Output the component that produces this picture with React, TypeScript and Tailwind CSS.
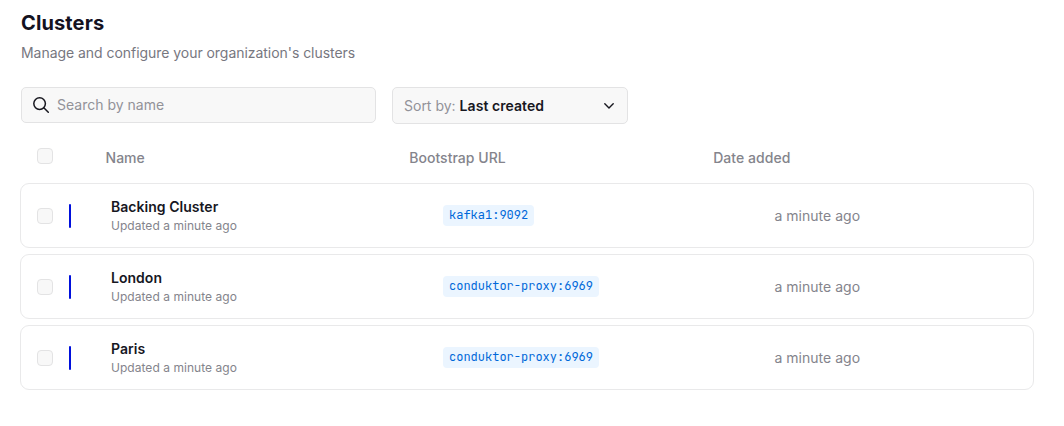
const rows = [
  { name: "Backing Cluster", url: "kafka1:9092" },
  { name: "London", url: "conduktor-proxy:6969" },
  { name: "Paris", url: "conduktor-proxy:6969" },
];

function Checkbox() {
  return <span className="block size-4 shrink-0 rounded-[4px] border border-[#e3e3e4] bg-[#f8f8f8]" />;
}

export default function App() {
  return (
    <main className="h-[426px] w-[1064px] overflow-hidden bg-white pl-5 pt-2 font-['Inter',sans-serif] text-[#17171f]">
      <h1 className="pl-px text-[20px] font-bold leading-[30px] tracking-[0.12px] text-[#14121f]">Clusters</h1>
      <p className="mt-1 pl-px text-[14px] leading-[22px] tracking-[-0.045px] text-[#77777f]">Manage and configure your organization's clusters</p>
      <div className="mt-[23px] flex items-start gap-4 pl-px">
        <div className="flex h-9 w-[355px] items-center gap-2 rounded-[5px] border border-[#e3e3e4] bg-[#f8f8f8] pl-[11px] text-[14px] text-[#929299]">
          <svg width="16" height="16" viewBox="0 0 16 16" fill="none" stroke="#17171f" strokeWidth="1.5" strokeLinecap="round">
            <circle cx="6.6" cy="6.6" r="5.8" />
            <path d="m10.8 10.8 4.5 4.5" />
          </svg>
          <span className="pb-0.5">Search by name</span>
        </div>
        <div className="flex h-[37px] w-[236px] items-center rounded-[5px] border border-[#e3e3e4] bg-[#f8f8f8] pl-[11px] pr-[13px] text-[14px]">
          <span className="text-[#929299]">Sort by:</span>
          <span className="ml-1 font-semibold tracking-[0.06px]">Last created</span>
          <svg className="ml-auto" width="10" height="6" viewBox="0 0 10 6" fill="none" stroke="#17171f" strokeWidth="1.4" strokeLinecap="round" strokeLinejoin="round">
            <path d="M.8.8 5 5 9.2.8" />
          </svg>
        </div>
      </div>
      <div className="flex h-[59px] w-[1014px] items-start pl-[17px] pt-6 text-[14px] font-medium leading-5 tracking-[0.04px] text-[#84848c]">
        <Checkbox />
        <span className="ml-[52.5px] w-[303.7px]">Name</span>
        <span className="w-[304px]">Bootstrap URL</span>
        <span>Date added</span>
      </div>
      <div className="flex w-[1014px] flex-col gap-[6px]">
        {rows.map((row) => (
          <div key={row.name} className="flex h-[65px] items-center rounded-[9px] border border-[#e9e9ea] pl-4">
            <Checkbox />
            <span className="ml-4 h-6 w-[2px] rounded-[1px] bg-[#0010dc]" />
            <div className="ml-10 w-[332px]">
              <div className="text-[14px] font-semibold leading-5 tracking-[0.03px]">{row.name}</div>
              <div className="text-[12px] leading-[18px] tracking-[0.04px] text-[#84848c]">Updated a minute ago</div>
            </div>
            <div className="flex w-[331.4px] pb-px">
              <span className="block h-[21px] rounded-[4px] bg-[#ebf5ff] px-[6px] font-['JetBrains_Mono','Roboto_Mono','Liberation_Mono',monospace] text-[12px] leading-[21px] text-[#0068d9]">{row.url}</span>
            </div>
            <span className="text-[14px] tracking-[0.03px] text-[#84848c]">a minute ago</span>
          </div>
        ))}
      </div>
    </main>
  );
}
